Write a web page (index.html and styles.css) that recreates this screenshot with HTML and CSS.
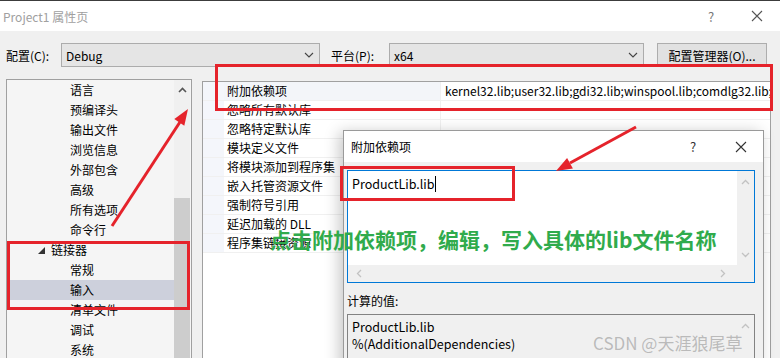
FILE: index.html
```html
<!DOCTYPE html>
<html lang="zh-CN">
<head>
  <meta charset="UTF-8" />
  <title>Project1 属性页</title>
  <link rel="stylesheet" href="styles.css">
</head>
<body>
  <div class="window">
    <div class="titlebar">
      <span class="title">Project1 属性页</span>
      <span class="tb-help">?</span>
      <svg class="tb-close" width="12" height="12" viewBox="0 0 12 12"><path d="M1 1L11 11M11 1L1 11" stroke="#555" stroke-width="1.1" fill="none"/></svg>
    </div>

    <div class="toolbar">
      <label class="lbl lbl-config">配置(C):</label>
      <div class="combo combo-config">
        <span>Debug</span>
        <svg class="chev" width="10" height="6" viewBox="0 0 10 6"><path d="M1 1L5 5L9 1" stroke="#444" stroke-width="1.1" fill="none"/></svg>
      </div>
      <label class="lbl lbl-platform">平台(P):</label>
      <div class="combo combo-platform">
        <span>x64</span>
        <svg class="chev" width="10" height="6" viewBox="0 0 10 6"><path d="M1 1L5 5L9 1" stroke="#444" stroke-width="1.1" fill="none"/></svg>
      </div>
      <button class="btn">配置管理器(O)...</button>
    </div>

    <div class="content">
      <div class="tree">
        <ul class="tree-list">
          <li>语言</li>
          <li>预编译头</li>
          <li>输出文件</li>
          <li>浏览信息</li>
          <li>外部包含</li>
          <li>高级</li>
          <li>所有选项</li>
          <li>命令行</li>
          <li class="node">
            <svg class="expander" width="7" height="7" viewBox="0 0 7 7"><path d="M7 0L7 7L0 7Z" fill="#333"/></svg>
            链接器
          </li>
          <li>常规</li>
          <li class="selected">输入</li>
          <li>清单文件</li>
          <li>调试</li>
          <li>系统</li>
        </ul>
        <div class="vscroll">
          <svg class="scroll-up" width="9" height="6" viewBox="0 0 9 6"><path d="M1 5L4.5 1.5L8 5" stroke="#555" stroke-width="1.6" fill="none"/></svg>
          <div class="thumb"></div>
        </div>
      </div>

      <div class="grid">
        <div class="row first"><span class="gutter"></span><span class="name">附加依赖项</span><span class="value">kernel32.lib;user32.lib;gdi32.lib;winspool.lib;comdlg32.lib;advapi32.lib</span></div>
        <div class="row"><span class="gutter"></span><span class="name">忽略所有默认库</span><span class="value"></span></div>
        <div class="row"><span class="gutter"></span><span class="name">忽略特定默认库</span><span class="value"></span></div>
        <div class="row"><span class="gutter"></span><span class="name">模块定义文件</span><span class="value"></span></div>
        <div class="row"><span class="gutter"></span><span class="name">将模块添加到程序集</span><span class="value"></span></div>
        <div class="row"><span class="gutter"></span><span class="name">嵌入托管资源文件</span><span class="value"></span></div>
        <div class="row"><span class="gutter"></span><span class="name">强制符号引用</span><span class="value"></span></div>
        <div class="row"><span class="gutter"></span><span class="name">延迟加载的 DLL</span><span class="value"></span></div>
        <div class="row"><span class="gutter"></span><span class="name">程序集链接资源</span><span class="value"></span></div>
      </div>
    </div>
  </div>

  <div class="dialog">
    <div class="dlg-title">
      <span class="dlg-caption">附加依赖项</span>
      <span class="dlg-help">?</span>
      <svg class="dlg-close" width="12" height="12" viewBox="0 0 12 12"><path d="M1 1L11 11M11 1L1 11" stroke="#333" stroke-width="1.1" fill="none"/></svg>
    </div>
    <div class="dlg-body">
      <div class="edit">
        <div class="edit-text">ProductLib.lib<span class="caret"></span></div>
        <div class="edit-vscroll">
          <svg width="9" height="6" viewBox="0 0 9 6"><path d="M1 5L4.5 1.5L8 5" stroke="#c2c2c2" stroke-width="1.3" fill="none"/></svg>
          <svg width="9" height="6" viewBox="0 0 9 6"><path d="M1 1L4.5 4.5L8 1" stroke="#c2c2c2" stroke-width="1.3" fill="none"/></svg>
        </div>
        <div class="edit-hscroll">
          <svg width="6" height="9" viewBox="0 0 6 9"><path d="M5 1L1.5 4.5L5 8" stroke="#c2c2c2" stroke-width="1.3" fill="none"/></svg>
          <svg width="6" height="9" viewBox="0 0 6 9"><path d="M1 1L4.5 4.5L1 8" stroke="#c2c2c2" stroke-width="1.3" fill="none"/></svg>
        </div>
        <div class="edit-corner"></div>
      </div>
      <div class="computed-label">计算的值:</div>
      <div class="computed">
        <div class="computed-text">ProductLib.lib<br>%(AdditionalDependencies)</div>
        <div class="computed-vscroll">
          <svg width="9" height="6" viewBox="0 0 9 6"><path d="M1 5L4.5 1.5L8 5" stroke="#c2c2c2" stroke-width="1.3" fill="none"/></svg>
        </div>
      </div>
    </div>
  </div>

  <div class="hint">点击附加依赖项，编辑，写入具体的lib文件名称</div>
  <div class="watermark">CSDN @天涯狼尾草</div>

  <svg class="annot" width="780" height="358" viewBox="0 0 780 358">
    <g fill="none" stroke="#e5232b" stroke-width="3">
      <rect x="216.5" y="65.5" width="555" height="44"/>
      <rect x="341.5" y="167.5" width="172" height="32"/>
      <rect x="8.5" y="242.5" width="180" height="66"/>
      <line x1="112" y1="226" x2="180" y2="122"/>
      <line x1="636" y1="127" x2="570" y2="163"/>
    </g>
    <g fill="#e5232b">
      <polygon points="188,109 184.3,125.7 174.3,119.1"/>
      <polygon points="556,171 572.9,168.6 567.1,158"/>
    </g>
  </svg>
</body>
</html>
```

FILE: styles.css
```css
body {
  margin: 0;
  width: 780px;
  height: 358px;
  overflow: hidden;
  position: relative;
  background: #f0f0f0;
  font-family: "Noto Sans CJK SC", sans-serif;
  font-size: 12px;
  color: #000;
}
.window {
  border-top: 1px solid #3c3c3c;
}
.titlebar {
  height: 30px;
  background: #fff;
  display: flex;
  align-items: center;
  position: relative;
}
.title {
  margin-left: 3px;
  color: #a0a0a0;
}
.tb-help {
  position: absolute;
  left: 708px;
  top: 6px;
  color: #777;
  font-size: 13px;
}
.tb-close {
  position: absolute;
  left: 751px;
  top: 9px;
}
.toolbar {
  display: flex;
  align-items: center;
  height: 48px;
}
.lbl-config {
  margin-left: 6px;
  width: 55px;
}
.lbl-platform {
  margin-left: 11px;
  width: 58px;
}
.combo {
  height: 24px;
  box-sizing: border-box;
  background: #e5e5e5;
  border: 1px solid #acacac;
  display: flex;
  align-items: center;
  justify-content: space-between;
  padding: 0 5px 0 4px;
}
.combo-config {
  width: 259px;
}
.combo-platform {
  width: 255px;
}
.btn {
  margin-left: 13px;
  width: 110px;
  height: 24px;
  background: #e1e1e1;
  border: 1px solid #adadad;
  font-family: inherit;
  font-size: 12px;
  padding: 0;
  color: #000;
}
.content {
  display: flex;
  align-items: flex-start;
}
.tree {
  margin-left: 6px;
  width: 186px;
  height: 290px;
  box-sizing: border-box;
  border: 1px solid #a0a0a0;
  background: #f5f5f5;
  display: flex;
}
.tree-list {
  list-style: none;
  margin: 0;
  padding: 0;
  flex: 1;
}
.tree-list li {
  height: 20px;
  line-height: 20px;
  padding-left: 63px;
  position: relative;
}
.tree-list li.node {
  padding-left: 44px;
}
.expander {
  position: absolute;
  left: 31px;
  top: 7px;
}
.tree-list li.selected {
  background: #cdd0dc;
}
.vscroll {
  width: 16px;
  margin-right: 1px;
  background: #f0f0f0;
  display: flex;
  flex-direction: column;
  align-items: center;
}
.scroll-up {
  margin-top: 7px;
}
.thumb {
  margin-top: 105px;
  width: 16px;
  flex: 1;
  background: #cdcdcd;
}
.grid {
  margin-left: 10px;
  margin-top: 2px;
  width: 569px;
  height: 290px;
  box-sizing: border-box;
  border: 1px solid #a0a0a0;
  background: #fff;
  overflow: hidden;
}
.row {
  display: flex;
  height: 19px;
  line-height: 18px;
  box-sizing: border-box;
  border-bottom: 1px solid #f0f0f0;
}
.gutter {
  width: 21px;
  background: #f4f6fb;
}
.name {
  width: 213px;
  padding-left: 3px;
  border-right: 1px solid #f0f0f0;
}
.row.first .name {
  background: #f3f5f9;
}
.value {
  flex: 1;
  padding-left: 4px;
  white-space: nowrap;
  overflow: hidden;
}
.dialog {
  position: absolute;
  left: 343px;
  top: 130px;
  width: 421px;
  height: 240px;
  box-sizing: border-box;
  border: 1px solid #9a9a9a;
  background: #f0f0f0;
  box-shadow: -4px 2px 14px rgba(0, 0, 0, 0.22);
}
.dlg-title {
  height: 31px;
  background: #fff;
  display: flex;
  align-items: center;
  position: relative;
}
.dlg-caption {
  margin-left: 7px;
}
.dlg-help {
  position: absolute;
  left: 346px;
  top: 6px;
  font-size: 13px;
  color: #333;
}
.dlg-close {
  position: absolute;
  left: 391px;
  top: 10px;
}
.dlg-body {
  padding: 8px 8px 0 3px;
}
.edit {
  height: 113px;
  box-sizing: border-box;
  border: 1px solid #0078d7;
  display: grid;
  grid-template-columns: 1fr 17px;
  grid-template-rows: 1fr 17px;
  background: #fff;
}
.edit-text {
  padding: 4px 0 0 4px;
  font-size: 12.5px;
  line-height: 17px;
}
.caret {
  display: inline-block;
  width: 1px;
  height: 16px;
  background: #000;
  vertical-align: -3px;
}
.edit-vscroll {
  background: #f0f0f0;
  display: flex;
  flex-direction: column;
  align-items: center;
  justify-content: space-between;
  padding: 8px 0 7px;
}
.edit-hscroll {
  background: #f0f0f0;
  display: flex;
  align-items: center;
  justify-content: space-between;
  padding: 0 11px 0 8px;
}
.edit-corner {
  background: #f0f0f0;
}
.computed-label {
  height: 31px;
  line-height: 36px;
}
.computed {
  height: 60px;
  box-sizing: border-box;
  border: 1px solid #828282;
  background: #f0f0f0;
  display: flex;
}
.computed-text {
  flex: 1;
  padding: 3px 0 0 4px;
  font-size: 12.5px;
  line-height: 17px;
}
.computed-vscroll {
  width: 17px;
  display: flex;
  justify-content: center;
  padding-top: 8px;
}
.hint {
  position: absolute;
  left: 270px;
  top: 224px;
  font-size: 21px;
  font-weight: 700;
  line-height: 30px;
  color: #30ab4c;
  white-space: nowrap;
}
.watermark {
  position: absolute;
  left: 593px;
  top: 330px;
  font-size: 17px;
  color: rgba(150, 150, 150, 0.6);
  white-space: nowrap;
}
.annot {
  position: absolute;
  left: 0;
  top: 0;
  pointer-events: none;
}
```
